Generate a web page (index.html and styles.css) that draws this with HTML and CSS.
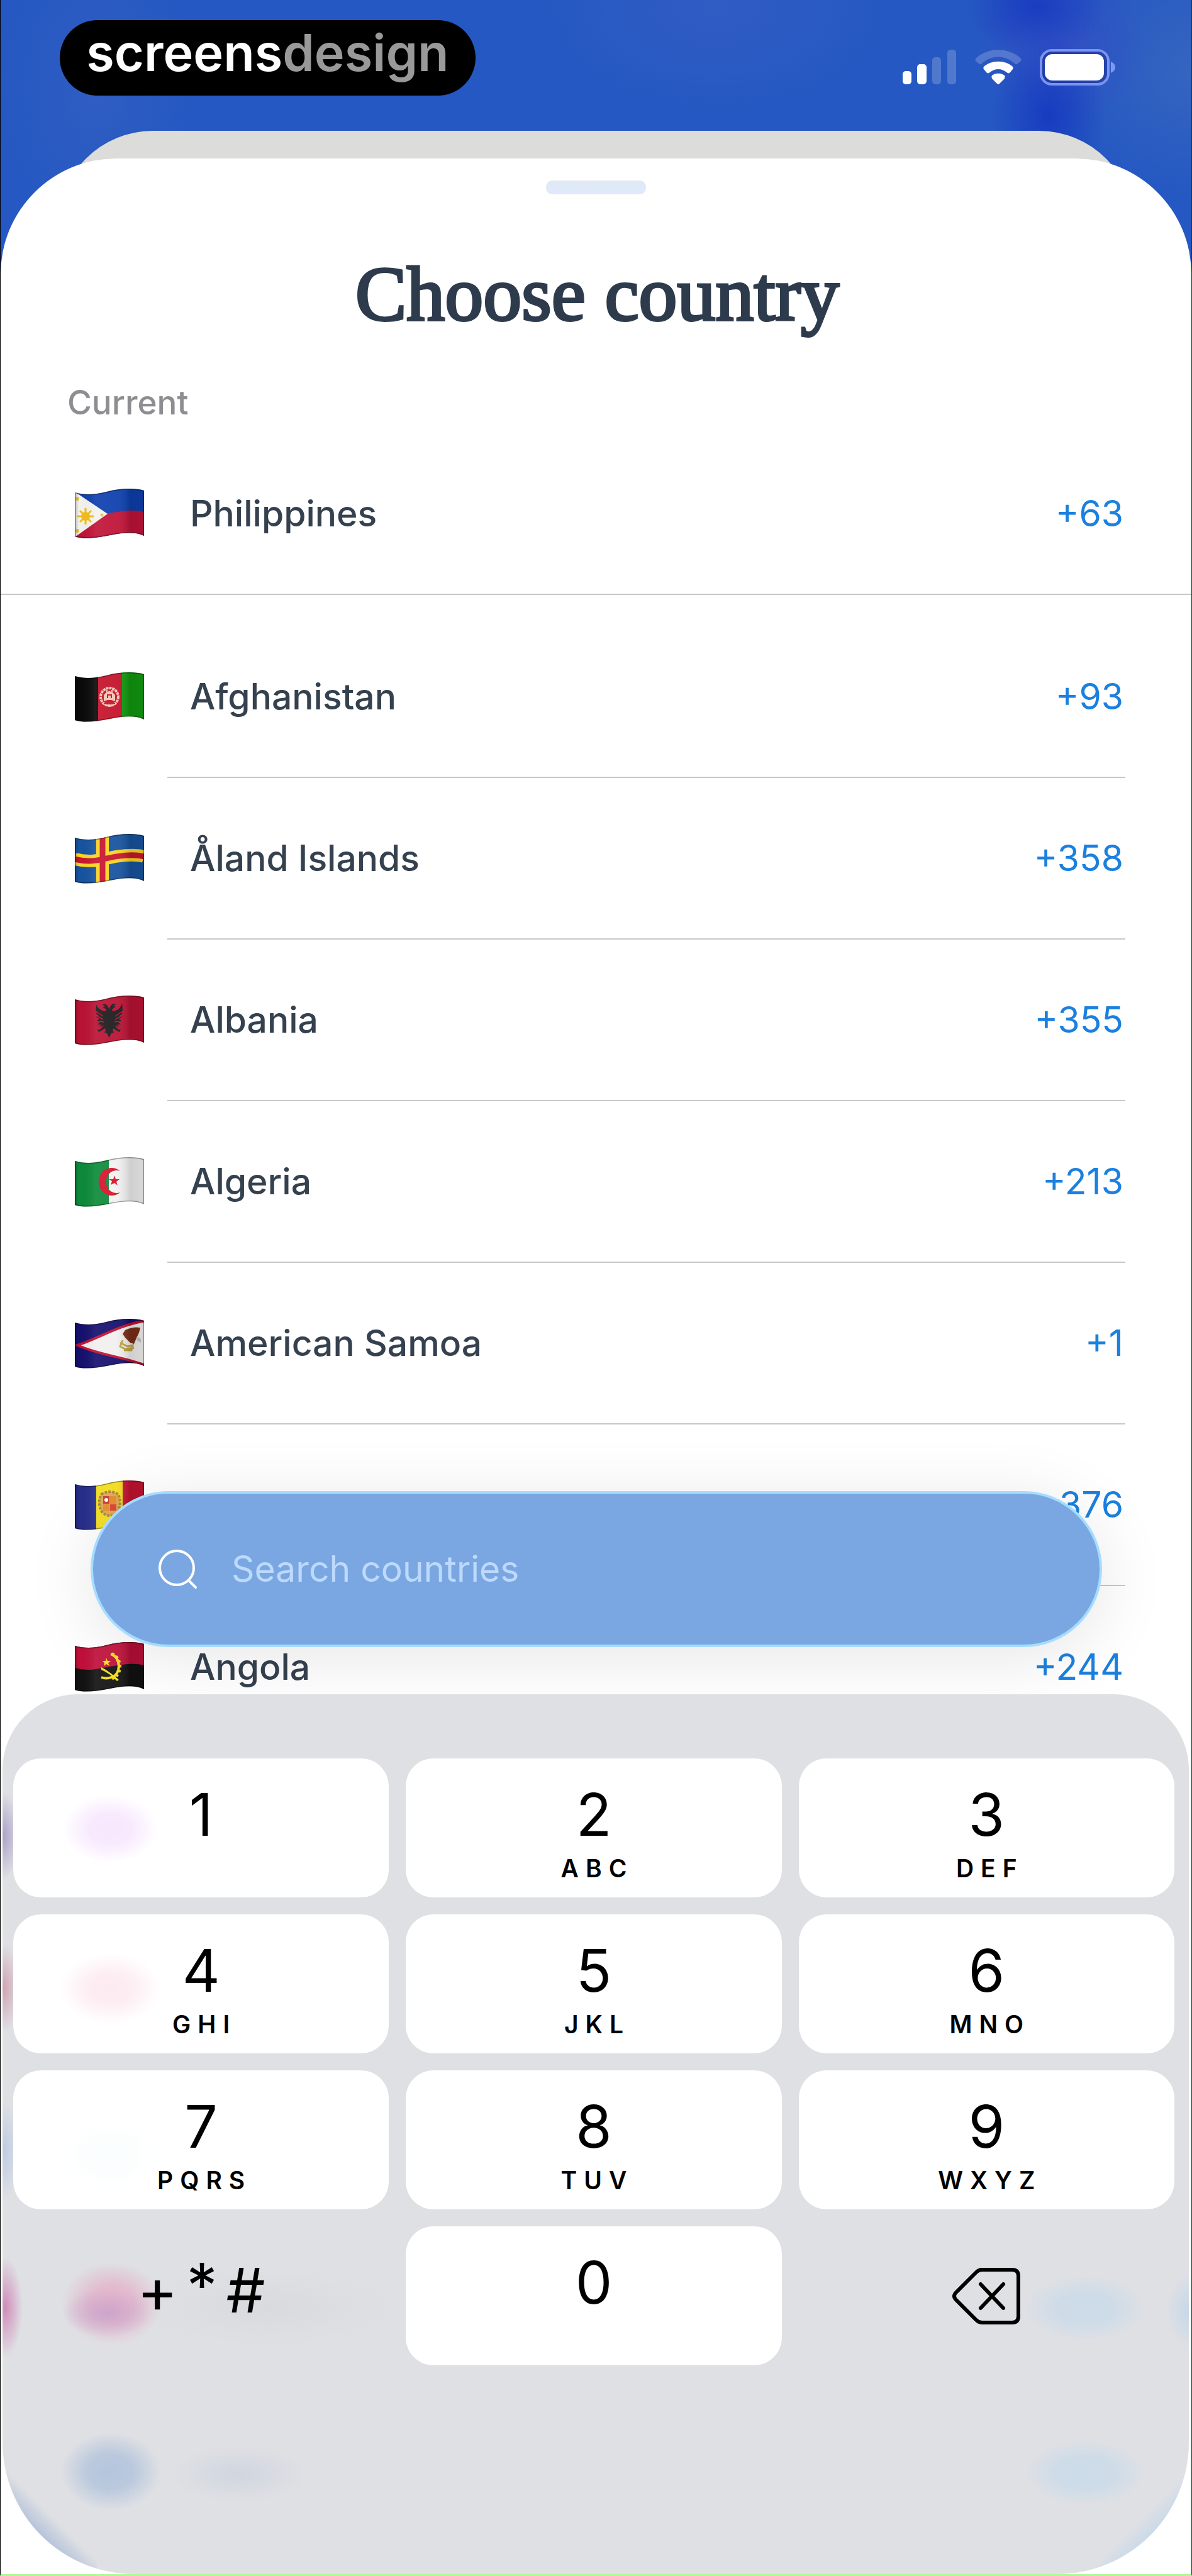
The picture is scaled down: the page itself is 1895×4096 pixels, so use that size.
FILE: index.html
```html
<!DOCTYPE html>
<html lang="en">
<head>
<meta charset="utf-8">
<meta name="viewport" content="width=device-width, initial-scale=1">
<title>Choose country</title>
<link rel="stylesheet" href="styles.css">
</head>
<body>
<svg class="defs" aria-hidden="true">
  <defs>
    <clipPath id="wave"><path d="M0 6C14 10 30 10 50 5S92 -2 110 3V75C96 68 76 70 56 74S14 81 0 76Z"/></clipPath>
    <linearGradient id="shade" x1="0" y1="0" x2="1" y2="0">
      <stop offset="0" stop-color="#000" stop-opacity=".22"/>
      <stop offset=".06" stop-color="#000" stop-opacity="0"/>
      <stop offset=".3" stop-color="#fff" stop-opacity=".08"/>
      <stop offset=".6" stop-color="#fff" stop-opacity=".06"/>
      <stop offset=".8" stop-color="#000" stop-opacity=".14"/>
      <stop offset="1" stop-color="#000" stop-opacity=".1"/>
    </linearGradient>
    <g id="cloth">
      <rect width="110" height="79" fill="url(#shade)"/>
      <path d="M0 6C14 10 30 10 50 5S92 -2 110 3V75C96 68 76 70 56 74S14 81 0 76Z" fill="none" stroke="#000" stroke-opacity=".35" stroke-width="3"/>
    </g>
  </defs>
</svg>

<div class="screen">
  <header class="status">
    <div class="brand"><span>screens</span><span class="brand-dim">design</span></div>
    <div class="indicators">
      <svg class="signal" viewBox="0 0 86 56" fill="#fff" role="img" aria-label="Signal">
        <rect x="0" y="34" width="14" height="21" rx="5"/><rect x="23" y="23" width="15" height="32" rx="5"/>
        <rect x="47" y="12" width="14" height="43" rx="5" opacity=".2"/><rect x="71" y="0" width="14" height="55" rx="5" opacity=".2"/>
      </svg>
      <svg class="wifi" viewBox="0 0 74 56" fill="#fff" role="img" aria-label="Wi-Fi">
        <path opacity=".2" d="M1 14C20 -4.500 54 -4.500 73 14Q74 16 73 18L67 23Q65 24 63 22C48 8 26 8 11 22Q9 24 7 23L1 18Q0 16 1 14Z"/>
        <path d="M14 27C26 16 48 16 60 27Q61.500 29 60 31L55 37Q53 38 51 36.500C43 29 31 29 23 36.500Q21 38 19 37L14 31Q12.500 29 14 27Z"/>
        <path d="M27 41C32 36.500 42 36.500 47 41Q48.500 43 47 46L39 54Q37 56 35 54L27 46Q25.500 43 27 41Z"/>
      </svg>
      <svg class="battery" viewBox="0 0 120 58" role="img" aria-label="Battery">
        <rect x="2" y="2" width="107" height="54" rx="17" fill="#1b2f8c" fill-opacity=".45" stroke="#7b93f0" stroke-width="4"/>
        <rect x="8" y="8" width="94" height="42" rx="12" fill="#fff"/>
        <path d="M113 20Q120 23 120 29T113 38Z" fill="#7d9aea"/>
      </svg>
    </div>
  </header>

  <div class="sheet-behind"></div>
  <main class="sheet">
    <div class="grabber"></div>
    <h1 class="title">Choose country</h1>
    <h2 class="section">Current</h2>
    <button class="row row-current" type="button">
      <svg class="flag" viewBox="0 0 110 79" aria-hidden="true"><g clip-path="url(#wave)">
        <rect width="110" height="79" fill="#0d3fae"/>
        <path d="M0 41C20 46 32 44 50 40S94 32 110 37V79H0Z" fill="#c01338"/>
        <path d="M0 5L52 40L0 77Z" fill="#f4f2ee"/>
        <g stroke="#f0bd1c" stroke-width="3"><path d="M17 31V57M4 44H30M8 35L26 53M26 35L8 53"/></g>
        <circle cx="17" cy="44" r="7" fill="#f0bd1c"/><circle cx="4" cy="16" r="3" fill="#e8c544"/><circle cx="4" cy="67" r="3" fill="#e8c544"/><circle cx="43" cy="42" r="2.500" fill="#e8c544"/>
        <use href="#cloth"/></g></svg>
      <span class="entry"><span class="name">Philippines</span><span class="code">+63</span></span>
    </button>

    <ul class="list">
      <li><button class="row" type="button">
        <svg class="flag" viewBox="0 0 110 79" aria-hidden="true"><g clip-path="url(#wave)">
          <rect width="37" height="79" fill="#0a0a0a"/><rect x="37" width="38" height="79" fill="#c4122a"/><rect x="75" width="35" height="79" fill="#12990f"/>
          <circle cx="55" cy="39" r="14" fill="none" stroke="#f3c4b4" stroke-width="4" stroke-dasharray="4 1"/>
          <path d="M46 46V36L50 32V28H52V32Q55 27 58 32V28H60V32L64 36V46L58 44H52Z" fill="#f3c4b4"/><path d="M52 41V36H58V41M46 50H64" stroke="#c4122a" stroke-width="2" fill="none"/><path d="M47 51Q55 55 63 51" stroke="#f3c4b4" stroke-width="2" fill="none"/>
          <use href="#cloth"/></g></svg>
        <span class="entry"><span class="name">Afghanistan</span><span class="code">+93</span></span>
      </button></li>
      <li><button class="row" type="button">
        <svg class="flag" viewBox="0 0 110 79" aria-hidden="true"><g clip-path="url(#wave)">
          <rect width="110" height="79" fill="#17539f"/>
          <g fill="none"><path d="M44 0V79M0 40C20 45 34 43 50 39S94 31 110 36" stroke="#fbd520" stroke-width="20"/><path d="M44 0V79M0 40C20 45 34 43 50 39S94 31 110 36" stroke="#c8152f" stroke-width="9"/></g>
          <use href="#cloth"/></g></svg>
        <span class="entry"><span class="name">Åland Islands</span><span class="code">+358</span></span>
      </button></li>
      <li><button class="row" type="button">
        <svg class="flag" viewBox="0 0 110 79" aria-hidden="true"><g clip-path="url(#wave)">
          <rect width="110" height="79" fill="#ba1233"/>
          <g fill="#1c1a1c"><path d="M54.500 21C51 13 47 12 44 15L48 17L44 19Q50 20 50 25C42 25 36 20 34 14L33 24L37 27L33 28L38 32L34 34L39 37L35 40L40 42L36 46L42 46L38 50L46 47L40 54L36 54L38 58L42 56L48 52L49 57L46 58L51 60L54.500 67L58 60L63 58L60 57L61 52L67 56L71 58L73 54L69 54L63 47L71 50L67 46L73 46L69 42L74 40L70 37L75 34L71 32L76 28L72 27L76 24L75 12C73 20 67 25 59 25Q59 20 65 18L61 16L65 14C62 11 58 13 54.500 21Z"/></g>
          <path d="M35 26L45 33M36 33L45 38M38 41L46 42M74 26L64 33M73 33L64 38M71 41L63 42" stroke="#ba1233" stroke-width="1.500"/>
          <use href="#cloth"/></g></svg>
        <span class="entry"><span class="name">Albania</span><span class="code">+355</span></span>
      </button></li>
      <li><button class="row" type="button">
        <svg class="flag" viewBox="0 0 110 79" aria-hidden="true"><g clip-path="url(#wave)">
          <rect width="54" height="79" fill="#0d8a3a"/><rect x="54" width="56" height="79" fill="#f1f1f1"/>
          <path d="M72 22A21 22 0 1 0 72 56A17 18 0 1 1 72 22Z" fill="#d6132b"/>
          <path d="M63 29L65 35L71 35L66 39L68 45L63 41L57 44L59 38L54 35L61 35Z" fill="#d6132b"/>
          <use href="#cloth"/></g></svg>
        <span class="entry"><span class="name">Algeria</span><span class="code">+213</span></span>
      </button></li>
      <li><button class="row" type="button">
        <svg class="flag" viewBox="0 0 110 79" aria-hidden="true"><g clip-path="url(#wave)">
          <rect width="110" height="79" fill="#15106e"/>
          <path d="M4 42C40 30 70 10 112 3V74C84 62 40 58 4 42Z" fill="#f2f0ef" stroke="#bf1233" stroke-width="4"/>
          <path d="M80 18Q92 12 104 14Q102 24 99 28L94 40L88 38L80 30L76 24Z" fill="#7a2e17"/><path d="M100 28L105 32V38L98 34Z" fill="#c9c6c2"/>
          <path d="M72 38L84 44L92 42L90 50H78M76 34L72 44L80 48L94 46" fill="none" stroke="#c2a542" stroke-width="3"/>
          <use href="#cloth"/></g></svg>
        <span class="entry"><span class="name">American Samoa</span><span class="code">+1</span></span>
      </button></li>
      <li><button class="row" type="button">
        <svg class="flag" viewBox="0 0 110 79" aria-hidden="true"><g clip-path="url(#wave)">
          <rect width="34" height="79" fill="#262e8c"/><rect x="34" width="42" height="79" fill="#f5df1a"/><rect x="76" width="34" height="79" fill="#cb1432"/>
          <path d="M42 22Q55 14 69 22Q75 36 68 50Q55 62 43 50Q35 36 42 22Z" fill="#dfa94a" stroke="#a98238" stroke-width="4" stroke-dasharray="4 2"/>
          <rect x="45" y="25" width="10" height="12" fill="#c63a2c"/><rect x="56" y="25" width="10" height="12" fill="#e8882a"/><rect x="45" y="38" width="10" height="10" fill="#e8882a"/><rect x="56" y="38" width="10" height="10" fill="#d8402c"/><circle cx="50" cy="31" r="3" fill="#fff"/>
          <use href="#cloth"/></g></svg>
        <span class="entry"><span class="name">Andorra</span><span class="code">+376</span></span>
      </button></li>
      <li><button class="row row-last" type="button">
        <svg class="flag" viewBox="0 0 110 79" aria-hidden="true"><g clip-path="url(#wave)">
          <rect width="110" height="79" fill="#121212"/>
          <path d="M0 0H110V37C94 32 70 36 50 40S20 46 0 41Z" fill="#c2103a"/>
          <path d="M57 19C74 24 74 52 58 56Q50 59 42 56" fill="none" stroke="#f7e11c" stroke-width="4"/><path d="M59 18C77 24 77 54 59 59" fill="none" stroke="#f7e11c" stroke-width="3" stroke-dasharray="4 4"/>
          <path d="M42 40Q54 46 70 60L67 62Q56 50 42 44Z" fill="#f7e11c"/><path d="M50 25L52 30L57 30L53 33L55 38L50 35L46 38L47 33L44 30L49 30Z" fill="#f7e11c"/>
          <use href="#cloth"/></g></svg>
        <span class="entry"><span class="name">Angola</span><span class="code">+244</span></span>
      </button></li>
    </ul>
  </main>

  <div class="dock">
    <label class="search">
      <svg class="search-icon" viewBox="0 0 62 64" fill="none" stroke="#fff" stroke-width="4" stroke-linecap="round" aria-hidden="true"><circle cx="29" cy="30" r="27"/><path d="M49 51L59 61"/></svg>
      <input class="search-input" type="text" placeholder="Search countries" aria-label="Search countries">
    </label>
    <div class="keyboard">
      <button class="key tint-violet" type="button"><span class="digit">1</span></button>
      <button class="key" type="button"><span class="digit">2</span><span class="letters">ABC</span></button>
      <button class="key" type="button"><span class="digit">3</span><span class="letters">DEF</span></button>
      <button class="key tint-pink" type="button"><span class="digit">4</span><span class="letters">GHI</span></button>
      <button class="key" type="button"><span class="digit">5</span><span class="letters">JKL</span></button>
      <button class="key" type="button"><span class="digit">6</span><span class="letters">MNO</span></button>
      <button class="key tint-mint" type="button"><span class="digit">7</span><span class="letters">PQRS</span></button>
      <button class="key" type="button"><span class="digit">8</span><span class="letters">TUV</span></button>
      <button class="key" type="button"><span class="digit">9</span><span class="letters">WXYZ</span></button>
      <button class="key key-plain" type="button"><span class="symbols"><span>+</span><span class="star">*</span><span>#</span></span></button>
      <button class="key" type="button"><span class="digit">0</span></button>
      <button class="key key-plain" type="button" aria-label="Delete">
        <svg class="delete" viewBox="0 0 108 90" fill="none" stroke="#000" stroke-width="6" stroke-linecap="round" stroke-linejoin="round" aria-hidden="true"><path d="M47 3H95Q105 3 105 13V77Q105 87 95 87H47Q42 87 38 83L5 50Q1 45 5 40L38 7Q42 3 47 3ZM45 26L81 64M81 26L45 64"/></svg>
      </button>
    </div>
  </div>
</div>
</body>
</html>
```
FILE: styles.css
```css
* { box-sizing: border-box; }
body { margin: 0; font-family: Inter, "Liberation Sans", sans-serif; color: #35414f; background: #fff; }
button { font: inherit; color: inherit; background: none; border: 0; padding: 0; text-align: left; }
ul { list-style: none; margin: 0; padding: 0; }
svg { display: block; flex: none; }
.defs { position: absolute; width: 0; height: 0; }

.screen {
  position: relative;
  display: flex;
  flex-direction: column;
  min-height: 100vh;
  overflow: hidden;
  border-left: 1px solid #000;
  border-right: 1px solid #0c3a26;
  border-bottom: 3px solid #b4f79c;
  background:
    radial-gradient(ellipse 90px 130px at 88% 185px, #183bc0, transparent),
    radial-gradient(ellipse 110px 80px at 87% 10px, #1a3cc0, transparent),
    radial-gradient(ellipse 140px 120px at 89% 75px, #3350c4, transparent),
    radial-gradient(ellipse 200px 200px at 100% 110px, #3565c0, transparent),
    radial-gradient(ellipse 300px 180px at 60% 10px, #305cc4, transparent),
    radial-gradient(ellipse 160px 260px at 8% 140px, #2f5dc2, transparent),
    #2558c2;
}

.status { display: flex; justify-content: space-between; align-items: flex-start; height: 208px; padding: 32px 121px 0 94px; }
.brand { display: flex; align-items: center; justify-content: center; width: 661px; height: 120px; padding-bottom: 16px; border-radius: 60px; background: #000; color: #fff; font-size: 81px; line-height: 96px; font-weight: 600; }
.brand-dim { color: #999; }
.indicators { display: flex; align-items: center; gap: 29px; padding-top: 46px; }
.signal { width: 86px; height: 56px; }
.wifi { width: 74px; height: 56px; }
.battery { width: 120px; height: 58px; }

.sheet-behind { height: 184px; margin: 0 92px -140px; border-radius: 150px 150px 0 0; background: #dcdddb; }
.sheet { position: relative; flex: 1; padding-top: 35px; border-radius: 184px 184px 0 0; background: #fff; }
.grabber { width: 159px; height: 22px; margin: 0 auto; border-radius: 10px; background: linear-gradient(#dfeaf3, #e0e9fc); }
.title { margin: 89px 0 70px; padding-left: 4px; text-align: center; font: 400 122px/140px "Liberation Serif", serif; color: #2d3b4c; -webkit-text-stroke: 4px #2d3b4c; }
.section { margin: 0 0 17px; padding-left: 106px; font-size: 53px; line-height: 64px; font-weight: 500; color: #8e8e92; }

.row { display: flex; align-items: center; width: 100%; height: 257px; padding: 0 105px 0 118px; }
.flag { width: 110px; height: 79px; }
.entry { display: flex; flex: 1; align-items: center; justify-content: space-between; height: 100%; margin-left: 37px; padding: 0 3px 0 36px; border-bottom: 2px solid #c8c8c6; font-size: 57px; line-height: 68px; }
.name { font-weight: 500; }
.code { color: #1b80de; }
.row-current { border-bottom: 2px solid #c8c8c8; }
.row-current .entry, .row-last .entry { border-bottom: 0; }
.list { padding-top: 34px; }

.dock { position: absolute; right: 0; bottom: 0; left: 0; display: flex; flex-direction: column; gap: 75px; }
.search { display: flex; align-items: center; gap: 54px; height: 248px; margin: 0 142px 0 143px; padding: 0 104px; border: 4px solid #a5dcff; border-radius: 124px; background: #7aa7e2; box-shadow: 0 16px 110px rgba(0, 0, 0, .1); }
.search-icon { width: 62px; height: 64px; }
.search-input { flex: 1; min-width: 0; padding: 0; border: 0; outline: 0; background: none; font: 400 57px/68px Inter, "Liberation Sans", sans-serif; color: #fff; }
.search-input::placeholder { color: #bddafc; opacity: 1; }

.keyboard {
  display: grid;
  grid-template-columns: repeat(3, 1fr);
  grid-auto-rows: 221px;
  gap: 27px;
  margin: 0 4px 0 3px;
  padding: 102px 23px 332px 17px;
  border-radius: 120px 120px 210px 210px;
  background:
    linear-gradient(225deg, transparent 50%, #b0c0d8 66%) left bottom / 150px 194px no-repeat,
    linear-gradient(135deg, transparent 52%, #c4d8ea 68%) right bottom / 150px 194px no-repeat,
    radial-gradient(ellipse 30px 70px at 0 225px, #aba0c8, transparent),
    radial-gradient(ellipse 30px 70px at 0 467px, #cfa2b0, transparent),
    radial-gradient(ellipse 30px 80px at 0 725px, #bccbe2, transparent),
    radial-gradient(ellipse 28px 80px at 4px 975px, #d08cba, transparent),
    radial-gradient(ellipse 72px 38px at 166px 984px, rgba(199, 160, 202, .8), rgba(199, 160, 202, 0)),
    radial-gradient(ellipse 80px 66px at 174px 969px, #e4b4cb, #e2bccf 45%, rgba(224, 200, 214, 0)),
    radial-gradient(ellipse 80px 62px at 172px 1236px, #b4c6de, #bac9dd 45%, rgba(200, 210, 224, 0)),
    radial-gradient(ellipse 110px 46px at 376px 1240px, #d0d6df, rgba(216, 219, 225, 0)),
    radial-gradient(ellipse 200px 60px at 420px 975px, #d8dadd, rgba(220, 221, 225, 0)),
    radial-gradient(ellipse 96px 52px at calc(100% - 165px) 976px, #cddce9, #cfdce8 50%, rgba(214, 221, 229, 0)),
    radial-gradient(ellipse 96px 52px at calc(100% - 165px) 1238px, #cbdbe8, #cedce8 50%, rgba(214, 221, 229, 0)),
    radial-gradient(ellipse 36px 60px at 100% 980px, #c6d8e8, transparent),
    #dfe0e4;
}
.key { display: flex; flex-direction: column; align-items: center; padding-top: 34px; border-radius: 44px; background-color: #fff; color: #000; }
.digit { font-size: 93px; line-height: 110px; font-weight: 400; }
.letters { margin-top: 8px; padding-left: 11px; font-size: 39px; line-height: 46px; font-weight: 600; letter-spacing: 11px; }
.key-plain { justify-content: center; padding: 0; background: none; }
.symbols { display: flex; gap: 14px; padding-bottom: 18px; font-size: 98px; line-height: 112px; font-weight: 400; }
.star { line-height: 96px; }
.delete { width: 108px; height: 90px; }
.tint-violet { background-image: radial-gradient(ellipse 76px 54px at 154px 112px, #f8e6fe, #f8eafe 45%, rgba(255, 255, 255, 0)); }
.tint-pink { background-image: radial-gradient(ellipse 80px 56px at 154px 118px, #fdeaf1, #fdeef3 45%, rgba(255, 255, 255, 0)); }
.tint-mint { background-image: radial-gradient(ellipse 75px 56px at 154px 134px, #f8fdfd, rgba(255, 255, 255, 0)); }
```
